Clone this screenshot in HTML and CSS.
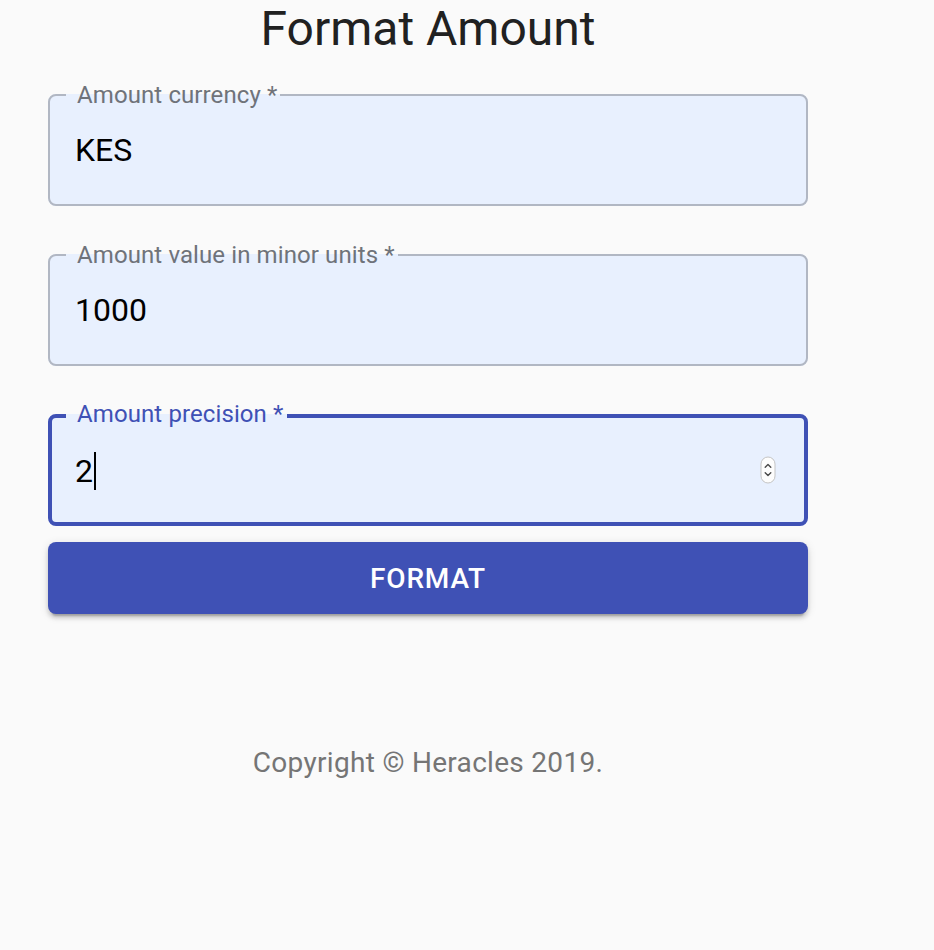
FILE: index.html
```html
<!DOCTYPE html>
<html lang="en">
<head>
<meta charset="utf-8">
<title>Format Amount</title>
<link rel="stylesheet" href="styles.css">
</head>
<body>
<main class="page">
  <h1 class="title">Format Amount</h1>
  <form class="form">
    <fieldset class="field">
      <legend class="label">Amount currency *</legend>
      <div class="value">KES</div>
    </fieldset>
    <fieldset class="field">
      <legend class="label">Amount value in minor units *</legend>
      <div class="value">1000</div>
    </fieldset>
    <fieldset class="field field--focused">
      <legend class="label">Amount precision *</legend>
      <div class="value"><span class="value-text">2<span class="caret"></span></span>
        <svg class="spinner" width="16" height="28" viewBox="0 0 16 28" aria-hidden="true">
          <rect x="1" y="1" width="14" height="26" rx="7" ry="7" fill="#fdfdfd" stroke="#c4c4c4" stroke-width="1"/>
          <path d="M5.2 11.2 L8 8.4 L10.8 11.2" fill="none" stroke="#4a4a4a" stroke-width="1.4" stroke-linecap="round" stroke-linejoin="round"/>
          <path d="M5.2 16.8 L8 19.6 L10.8 16.8" fill="none" stroke="#4a4a4a" stroke-width="1.4" stroke-linecap="round" stroke-linejoin="round"/>
        </svg>
      </div>
    </fieldset>
    <button type="button" class="button">Format</button>
  </form>
  <p class="copyright">Copyright © Heracles 2019.</p>
</main>
</body>
</html>
```
FILE: styles.css
```css
html, body {
  margin: 0;
  padding: 0;
  background: #fafafa;
}

body {
  font-family: Roboto, "Noto Sans", "Liberation Sans", sans-serif;
}

.page {
  width: 760px;
  padding-left: 48px;
}

.title {
  margin: 0;
  padding-top: 1px;
  font-size: 48px;
  line-height: 56px;
  font-weight: 400;
  color: #212121;
  text-align: center;
}

.form {
  display: flex;
  flex-direction: column;
  margin-top: 26px;
}

.field {
  margin: 0;
  padding: 0;
  min-width: 0;
  border: 2px solid #b1b7c3;
  border-radius: 8px;
  background: #e8f0fe;
}

.field + .field {
  margin-top: 37px;
}

.label {
  margin-left: 16px;
  padding: 0 3px 0 11px;
  font-size: 24px;
  line-height: 24px;
  color: #6f737a;
  letter-spacing: 0.1px;
}

.value {
  display: flex;
  align-items: center;
  justify-content: space-between;
  height: 32px;
  padding: 27px 30px 38px 25px;
  font-size: 32px;
  line-height: 32px;
  color: #000;
}

.field.field--focused {
  margin-top: 36px;
  border: 4px solid #3f51b5;
}

.field--focused .label {
  margin-left: 14px;
  padding: 0 4px 4px 11px;
  color: #3f51b5;
}

.field--focused .value {
  padding: 25px 28px 35px 23px;
}

.value-text {
  display: inline-flex;
  align-items: center;
}

.caret {
  display: inline-block;
  width: 2px;
  height: 38px;
  margin-left: 1px;
  background: #000;
}

.spinner {
  display: block;
  margin-top: -2px;
}

.button {
  margin-top: 16px;
  height: 72px;
  border: 0;
  border-radius: 8px;
  background: #3f51b5;
  color: #fff;
  font-family: Roboto, "Noto Sans", "Liberation Sans", sans-serif;
  font-size: 28px;
  font-weight: 500;
  letter-spacing: 0.8px;
  text-transform: uppercase;
  box-shadow: 0 6px 2px -4px rgba(0, 0, 0, 0.2), 0 4px 4px 0 rgba(0, 0, 0, 0.14), 0 2px 10px 0 rgba(0, 0, 0, 0.12);
  cursor: pointer;
}

.copyright {
  margin: 129px 0 0;
  font-size: 28px;
  line-height: 40px;
  letter-spacing: 0.3px;
  color: #757575;
  text-align: center;
}
```
